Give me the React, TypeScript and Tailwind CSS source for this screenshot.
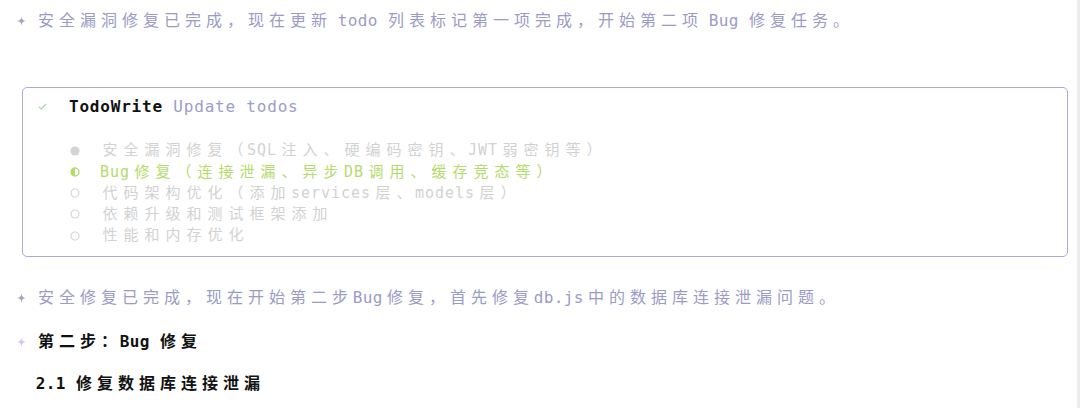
import React from 'react';

const PUNCT = '（）、，。：';
const isWide = (ch: string) => ch.charCodeAt(0) > 0x2e80;

function cellClass(ch: string) {
  if (ch === ' ') return 'w-[8px]';
  if (isWide(ch)) return 'w-[21px]';
  return 'w-[10px]';
}

// grid-ish text: wide (CJK) glyphs get their own wide cell, latin a narrow one,
// plus a bit of autospace where a CJK letter meets a latin letter
function Cells({ text }: { text: string }) {
  const chars = Array.from(text);
  return (
    <>
      {chars.map((ch, i) => {
        const prev = chars[i - 1];
        const gap =
          prev !== undefined &&
          prev !== ' ' &&
          ch !== ' ' &&
          !PUNCT.includes(prev) &&
          !PUNCT.includes(ch) &&
          isWide(prev) !== isWide(ch);
        return (
          <span key={i} className={`inline-block text-center ${cellClass(ch)} ${gap ? 'ml-[2px]' : ''}`}>
            {ch === ' ' ? '\u00a0' : ch}
          </span>
        );
      })}
    </>
  );
}

function Sparkle({ color }: { color: string }) {
  return (
    <span className="w-[10px] ml-[16px] mr-[9.5px] flex justify-center">
      <svg width="9" height="10" viewBox="0 0 9 10">
        <path d="M4.5 0 C4.9 3.4 5.6 4.4 9 5 C5.6 5.6 4.9 6.6 4.5 10 C4.1 6.6 3.4 5.6 0 5 C3.4 4.4 4.1 3.4 4.5 0 Z" fill={color} />
      </svg>
    </span>
  );
}

function Dot({ kind }: { kind: 'done' | 'doing' | 'todo' }) {
  if (kind === 'done') {
    return (
      <svg width="10" height="10" viewBox="0 0 10 10">
        <circle cx="5" cy="5" r="4.6" fill="#d4d4d4" />
      </svg>
    );
  }
  if (kind === 'doing') {
    return (
      <svg width="10" height="10" viewBox="0 0 10 10">
        <circle cx="5" cy="5" r="4" fill="none" stroke="#b5dc6c" strokeWidth="1.4" />
        <path d="M5 1 A4 4 0 0 0 5 9 Z" fill="#b5dc6c" />
      </svg>
    );
  }
  return (
    <svg width="10" height="10" viewBox="0 0 10 10">
      <circle cx="5" cy="5" r="4" fill="none" stroke="#d6d6d6" strokeWidth="1.2" />
    </svg>
  );
}

const todos: { text: string; kind: 'done' | 'doing' | 'todo' }[] = [
  { text: '安全漏洞修复（SQL注入、硬编码密钥、JWT弱密钥等）', kind: 'done' },
  { text: 'Bug修复（连接泄漏、异步DB调用、缓存竞态等）', kind: 'doing' },
  { text: '代码架构优化（添加services层、models层）', kind: 'todo' },
  { text: '依赖升级和测试框架添加', kind: 'todo' },
  { text: '性能和内存优化', kind: 'todo' },
];

export default function App() {
  return (
    <div className="w-[1080px] h-[408px] bg-white overflow-hidden border-r-[3px] border-[#ededed] text-[16px] font-['DejaVu_Sans_Mono','Noto_Sans_CJK_SC',monospace]">
      {/* status line */}
      <div className="flex items-center h-[20px] mt-[11px] text-[#9b9bc8]">
        <Sparkle color="#a4a4c8" />
        <div className="whitespace-nowrap">
          <Cells text="安全漏洞修复已完成，现在更新 todo 列表标记第一项完成，开始第二项 Bug 修复任务。" />
        </div>
      </div>

      {/* tool call box */}
      <div className="ml-[22px] mr-[9px] mt-[56px] border-[1.5px] border-[#aaaadb] rounded-[5px] pt-[8.5px] pb-[9.5px]">
        <div className="flex items-center h-[20px] pl-[14px]">
          <span className="w-[10px] flex justify-center">
            <svg width="9" height="7" viewBox="0 0 9 7">
              <path d="M0.8 3.6 L3.3 6 L8.2 0.8" fill="none" stroke="#a3d6a3" strokeWidth="1.2" />
            </svg>
          </span>
          <div className="ml-[22px] whitespace-nowrap text-[16px] tracking-[0.8px]">
            <span className="font-bold text-[#111]">TodoWrite</span>
            <span className="text-[#9c9ccd]"> Update todos</span>
          </div>
        </div>

        <div className="mt-[23.5px] flex flex-col">
          {todos.map((t) => (
            <div key={t.text} className="flex items-center h-[21.25px] pl-[46.5px]">
              <span className="w-[10px] flex justify-center">
                <Dot kind={t.kind} />
              </span>
              <div
                className={`ml-[20px] whitespace-nowrap text-[15px] ${
                  t.kind === 'doing' ? 'text-[#b4db6b]' : 'text-[#d2d2d2]'
                }`}
              >
                <Cells text={t.text} />
              </div>
            </div>
          ))}
        </div>
      </div>

      <div className="flex items-center h-[20px] mt-[31px] text-[#9b9bc8]">
        <Sparkle color="#a4a4c8" />
        <div className="whitespace-nowrap">
          <Cells text="安全修复已完成，现在开始第二步Bug修复，首先修复db.js中的数据库连接泄漏问题。" />
        </div>
      </div>

      <div className="flex items-center h-[20px] mt-[24px] font-bold text-[#111]">
        <Sparkle color="#dcc0f2" />
        <div className="whitespace-nowrap">
          <Cells text="第二步：Bug 修复" />
        </div>
      </div>

      <div className="flex items-center h-[20px] mt-[22px] font-bold text-[#111]">
        <span className="w-[35.5px]" />
        <div className="whitespace-nowrap">
          <Cells text="2.1 修复数据库连接泄漏" />
        </div>
      </div>
    </div>
  );
}
